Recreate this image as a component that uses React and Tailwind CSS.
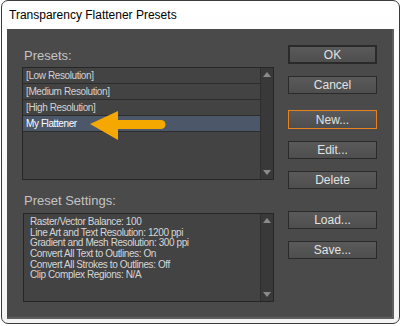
import React from "react";

const btn =
  "w-[89px] h-[18px] flex items-center justify-center text-[12px] text-[#e2e2e2] bg-gradient-to-b from-[#5a5a5a] to-[#4e4e4e] border border-[#2a2a2a]";

function Btn({ label, cls = "", extra = "" }) {
  return <div className={`${btn} ${extra} ${cls}`}>{label}</div>;
}

function Scrollbar() {
  return (
    <div className="w-[13px] bg-[#393939] border-l border-[#2e2e2e] flex flex-col items-center justify-between py-[4px]">
      <svg width="8" height="5" viewBox="0 0 8 5">
        <polygon points="4,0 8,5 0,5" fill="#8a8a8a" />
      </svg>
      <svg width="8" height="5" viewBox="0 0 8 5">
        <polygon points="0,0 8,0 4,5" fill="#8a8a8a" />
      </svg>
    </div>
  );
}

export default function App() {
  const rows = ["[Low Resolution]", "[Medium Resolution]", "[High Resolution]", "My Flattener"];
  const settings = [
    "Raster/Vector Balance: 100",
    "Line Art and Text Resolution: 1200 ppi",
    "Gradient and Mesh Resolution: 300 ppi",
    "Convert All Text to Outlines: On",
    "Convert All Strokes to Outlines: Off",
    "Clip Complex Regions: N/A",
  ];
  return (
    <div
      className="w-[401px] h-[326px] bg-white pl-[1px] pt-0"
      style={{ fontFamily: '"Liberation Sans", Arial, sans-serif' }}
    >
      <div className="w-[399px] h-[324px] border border-[#3a3a3a] rounded-[7px] bg-gradient-to-b from-white to-[#f4f4f4] flex flex-col px-[5px] pb-[4px]">
        <div className="h-[28px] flex items-center pl-[2px] text-[12px] text-black">
          Transparency Flattener Presets
        </div>
        <div className="flex-1 bg-[#4a4a4a] border-r-2 border-b-2 border-[#5e5e5e] flex pl-[15px] pt-[18px]">
          <div className="w-[252px] flex flex-col">
            <div className="h-[17px] pl-[2px] flex items-center text-[13px] text-[#c4c4c4]">Presets:</div>
            <div className="mt-[3px] h-[113px] border border-[#262626] bg-[#434343] flex relative">
              <div className="flex-1 flex flex-col">
                {rows.map((r, i) => (
                  <div
                    key={r}
                    className={`h-[16px] border-b border-[#2c2c2c] pl-[3px] flex items-center text-[10px] tracking-[-0.4px] ${
                      i === 3 ? "bg-[#4c576a] text-white" : "text-[#d2d2d2]"
                    }`}
                  >
                    {r}
                  </div>
                ))}
              </div>
              <Scrollbar />
              <svg
                className="absolute left-[67px] top-[42px]"
                width="80"
                height="32"
                viewBox="0 0 80 32"
              >
                <polygon points="0,14 28,1 28,30" fill="#f5a800" />
                <path d="M26 10 H71 A4.5 4.5 0 0 1 71 19 H26 Z" fill="#f5a800" />
              </svg>
            </div>
            <div className="mt-[12px] h-[17px] pl-[2px] flex items-center text-[13px] text-[#c4c4c4]">
              Preset Settings:
            </div>
            <div className="mt-[4px] h-[89px] ml-[1px] border border-[#262626] bg-[#434343] flex">
              <div className="flex-1 pl-[6px] pt-[3px] flex flex-col">
                {settings.map((s) => (
                  <div key={s} className="h-[10.7px] leading-[10.7px] text-[10px] tracking-[-0.4px] text-[#d6d6d6] whitespace-nowrap">
                    {s}
                  </div>
                ))}
              </div>
              <Scrollbar />
            </div>
          </div>
          <div className="ml-[14px] flex flex-col pt-[-2px]">
            <Btn label="OK" cls="-mt-[2px] h-[19px] border-2 border-[#1e1e1e]" />
            <Btn label="Cancel" cls="mt-[12px]" />
            <Btn label="New..." cls="mt-[16px] h-[19px] !border-[#e8821e]" />
            <Btn label="Edit..." cls="mt-[12px]" />
            <Btn label="Delete" cls="mt-[12px]" />
            <Btn label="Load..." cls="mt-[22px]" />
            <Btn label="Save..." cls="mt-[12px]" />
          </div>
        </div>
      </div>
    </div>
  );
}
